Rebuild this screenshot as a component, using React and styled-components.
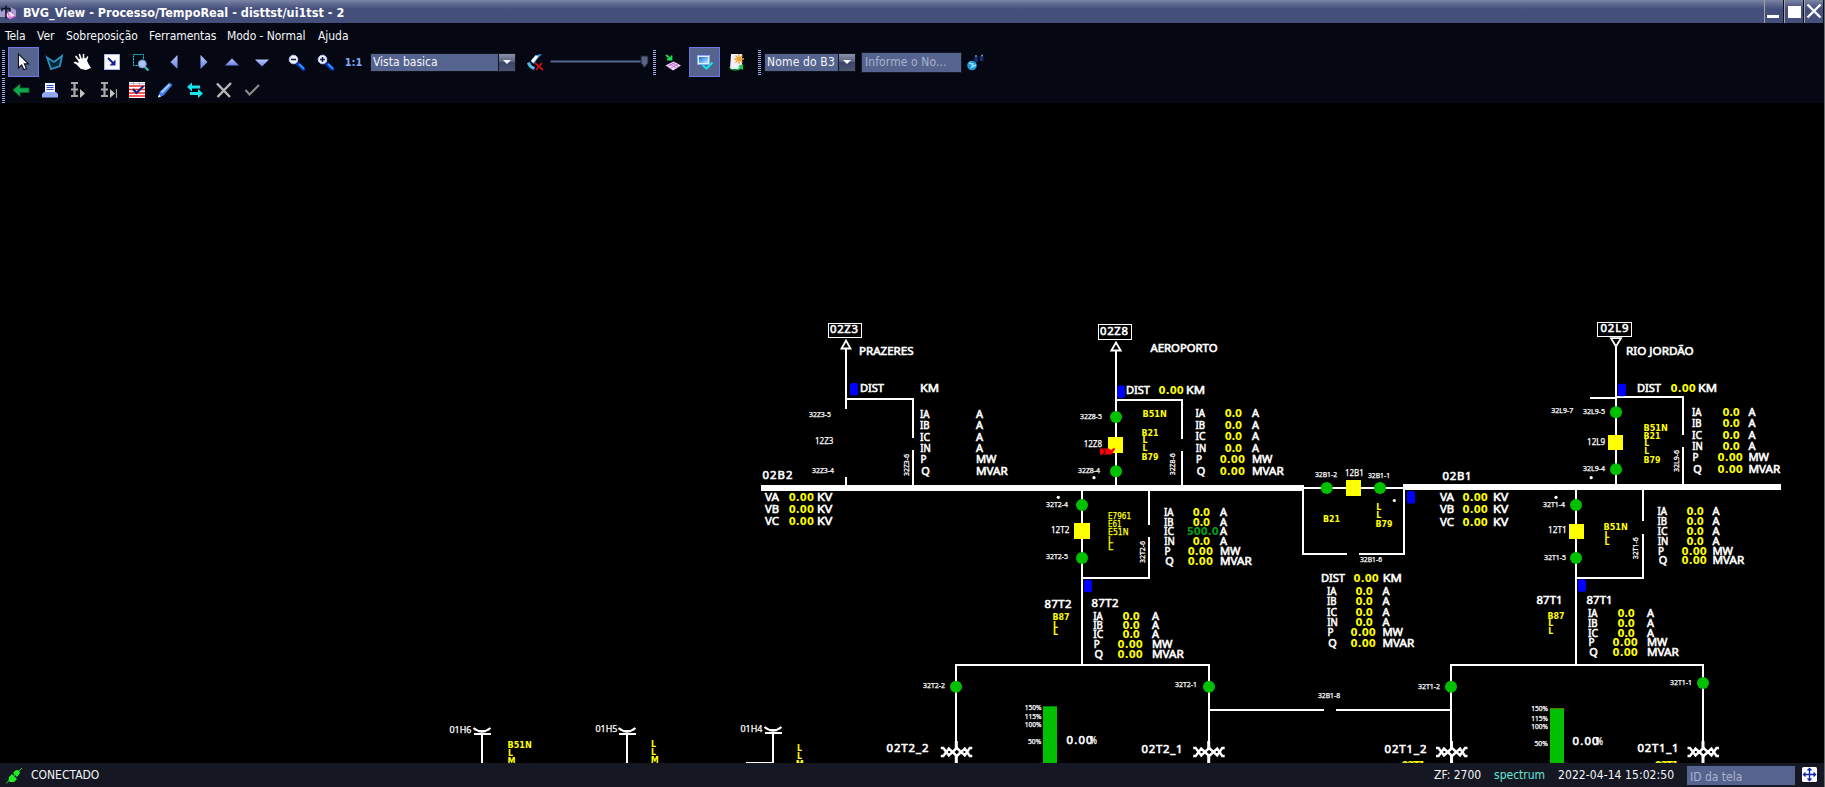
import React from "react";
import styled, { createGlobalStyle } from "styled-components";

const UI = '"DejaVu Sans Condensed", "DejaVu Sans", sans-serif';

const Global = createGlobalStyle`
  html, body { margin: 0; background: #000; overflow: hidden; }
  * { box-sizing: border-box; }
`;

const Window = styled.div`
  width: 1825px;
  height: 787px;
  display: flex;
  flex-direction: column;
  background: #000;
  border-right: 1px solid #6c6c6c;
  font: 12px ${UI};
  color: #f4f6fa;
  overflow: hidden;
`;

/* ---------- title bar and menu ---------- */

const TitleBar = styled.header`
  height: 23px;
  flex: none;
  display: flex;
  align-items: center;
  background: linear-gradient(#7c86a6 0, #616b92 4px, #44507b 9px, #44507b 100%);
`;

const TitleIcon = styled.svg`
  width: 17px;
  height: 17px;
  margin: 2px 6px 0 0;
`;

const Title = styled.h1`
  flex: 1;
  margin: 2px 0 0;
  font: bold 12.5px ${UI};
  letter-spacing: 0.03px;
  color: #fff;
`;

const WinButton = styled.button`
  width: 20px;
  height: 23px;
  padding: 0;
  border: 0;
  border-left: 1px solid #a8a498;
  border-right: 1px solid #10131f;
  background: transparent;
  display: flex;
  svg { width: 18px; height: 23px; }
`;

const MenuBar = styled.nav`
  height: 24px;
  flex: none;
  display: flex;
  align-items: center;
  padding: 1px 0 0 5px;
  background: #050812;
`;

const MenuItem = styled.span`
  width: ${(p) => p.$w}px;
  letter-spacing: -0.05px;
  white-space: nowrap;
`;

/* ---------- tool bars ---------- */

const ToolRow = styled.div`
  height: ${(p) => p.$h}px;
  flex: none;
  display: flex;
  align-items: center;
  padding: 0 0 1px 2px;
  background: #050812;
`;

const Grip = styled.i`
  width: 3px;
  height: 25px;
  margin: 0 ${(p) => p.$after || 0}px 0 ${(p) => p.$before || 0}px;
  background: repeating-linear-gradient(#a3a9e6 0 1px, #050812 1px 2px);
`;

const Tool = styled.button`
  width: ${(p) => p.$w}px;
  height: 30px;
  padding: 0;
  margin-left: ${(p) => p.$gap || 0}px;
  flex: none;
  display: flex;
  align-items: center;
  justify-content: center;
  font: bold 11px ${UI};
  color: #7fa9f5;
  border: 1px solid ${(p) => (p.$active ? "#6e74e6" : "transparent")};
  background: ${(p) => (p.$active ? "#55648f" : "transparent")};
  svg { width: 24px; height: 24px; flex: none; overflow: visible; }
`;

const Combo = styled.div`
  width: ${(p) => p.$w}px;
  height: 19px;
  flex: none;
  display: flex;
  border: 1px solid #10131c;
  background: #55648f;
`;

const ComboText = styled.span`
  flex: 1;
  padding-left: 2px;
  line-height: 17px;
  white-space: nowrap;
  overflow: hidden;
  letter-spacing: ${(p) => p.$track || 0}px;
`;

const ComboArrow = styled.span`
  width: 17px;
  display: flex;
  align-items: center;
  justify-content: center;
  border-left: 1px solid #10131c;
  background: linear-gradient(#8a90a8, #5b6382 45%, #3d4666 50%, #4b5473);
  &::after {
    content: "";
    border: 4px solid transparent;
    border-top-color: #fff;
    border-bottom: 0;
  }
`;

const Slider = styled.svg`
  width: 102px;
  height: 20px;
  flex: none;
`;

const Dots = styled.i`
  width: 1px;
  height: 22px;
  margin-left: 1px;
  background: repeating-linear-gradient(#000 0 1px, #10131c 1px 2px);
`;

const Field = styled.div`
  width: ${(p) => p.$w}px;
  height: ${(p) => p.$h}px;
  flex: none;
  padding: ${(p) => p.$drop || 0}px 0 0 3px;
  line-height: ${(p) => p.$h - 3}px;
  border: 1px solid #161a26;
  background: #55648f;
  color: #aab3cc;
  letter-spacing: ${(p) => p.$track || 0}px;
  margin-left: ${(p) => p.$gap || 0}px;
`;

/* ---------- status bar ---------- */

const StatusBar = styled.footer`
  height: 24px;
  flex: none;
  display: flex;
  align-items: center;
  background: #151822;
`;

const Status = styled.span`
  width: ${(p) => p.$w}px;
  flex: ${(p) => (p.$grow ? 1 : "none")};
  letter-spacing: ${(p) => p.$track || 0}px;
  white-space: nowrap;
  color: ${(p) => p.$color || "#f4f6fa"};
`;

const StatusIcon = styled.svg`
  width: ${(p) => p.$w}px;
  height: 20px;
  flex: none;
`;

/* ---------- one-line diagram ---------- */

const Diagram = styled.svg`
  width: 1824px;
  height: 660px;
  flex: none;
  display: block;
  background: #000;
`;

const Wire = styled.path`
  fill: none;
  stroke: #fff;
  stroke-width: ${(p) => p.$t || 2}px;
  shape-rendering: crispEdges;
`;

const Label = styled.text`
  font-family: ${(p) => (p.$mono ? UI : '"Noto Sans", sans-serif')};
  font-size: ${(p) => p.$size || 11.5}px;
  font-weight: ${(p) => (p.$thin ? 400 : 700)};
  fill: ${(p) => p.$fill || "#fff"};
  stroke: ${(p) => (p.$edge ? p.$fill || "#fff" : "none")};
  stroke-width: ${(p) => p.$edge || 0}px;
`;

const Disc = styled.circle`
  fill: #00c000;
`;

const Breaker = styled.rect`
  fill: #ff0;
`;

const Flag = styled.rect`
  fill: #00f;
  width: 8px;
  height: 12.5px;
`;

/* Equipment names that start with a digit are set with open spacing. */
const Name = ({ x, y, w, s = 11.3, children }) => (
  <Label x={x} y={y} textLength={w} lengthAdjust={/^\d/.test(children) ? "spacing" : "spacingAndGlyphs"}
    $size={s} $thin $edge={0.6}>{children}</Label>
);
const Tag = ({ x, y, w = 22, s = 6.5, children }) => (
  <Label x={x} y={y} textLength={w} lengthAdjust="spacingAndGlyphs" $size={s} $thin $edge={0.25}>{children}</Label>
);
const VTag = ({ x, y, children }) => (
  <Label transform={`translate(${x} ${y}) rotate(-90)`} textLength={22} lengthAdjust="spacingAndGlyphs" $size={7} $thin $edge={0.25}>{children}</Label>
);
const Value = ({ x, y, w = 25.3, fill = "#ff0", children }) => (
  <Label x={x} y={y} textLength={w} lengthAdjust="spacing" $mono $size={11.2} $fill={fill}>{children}</Label>
);
const RELAY_W = { 1: 5, 3: 17, 4: 24.3, 5: 23 };
const Relay = ({ x, y, w, thin, children }) => (
  <Label x={x} y={y} textLength={w || (children === "M" ? 8 : RELAY_W[children.length])} lengthAdjust="spacingAndGlyphs"
    $mono $size={9} $thin={thin} $fill="#ff0" $edge={thin ? 0.25 : 0}>{children}</Label>
);

const LABEL_W = { IA: 9.5, IB: 9.5, IC: 10, IN: 10.5, P: 6, Q: 8.5 };
const OFFSET = { IN: 0.2, P: 0.6, Q: 1.2 };
const UNIT_W = { A: 7, MW: 20.5, MVAR: 31.7 };

const Readings = ({ lx, vx, ux, rows, empty, over = {} }) =>
  rows.map(([name, y]) => {
    const power = name === "P" || name === "Q";
    const unit = name === "P" ? "MW" : name === "Q" ? "MVAR" : "A";
    return (
      <g key={name}>
        <Name x={lx + (OFFSET[name] || 0)} y={y} w={LABEL_W[name]}>{name}</Name>
        {!empty && (over[name]
          ? <Value x={vx - 1} y={y} w={32} fill="#00a010">{over[name]}</Value>
          : <Value x={power ? vx : vx + 5} y={y} w={power ? 25.3 : 17.3}>{power ? "0.00" : "0.0"}</Value>)}
        <Name x={ux} y={y} w={UNIT_W[unit]}>{unit}</Name>
      </g>
    );
  });

const Voltages = ({ x, vx, ux, ys }) =>
  ["VA", "VB", "VC"].map((n, i) => (
    <g key={n}>
      <Name x={x} y={ys[i]} w={14}>{n}</Name>
      <Value x={vx} y={ys[i]}>0.00</Value>
      <Name x={ux} y={ys[i]} w={15.3}>KV</Name>
    </g>
  ));

const Coil = ({ x, y }) => (
  <g fill="none" stroke="#fff" strokeWidth="2.4">
    <path d={`M${x - 15.5} ${y - 4}h2.500l5.500 7.500l8 -7.500l8 7.500l5 -7.500h2.500`} />
    <path d={`M${x - 15.5} ${y + 4}h2.500l5.500 -7.500l8 7.500l8 -7.500l5 7.500h2.500`} />
    <path strokeWidth="3" d={`M${x} ${y - 11}v8 M${x} ${y + 3}v9`} />
  </g>
);

const Load = ({ gauge, x, y, top, ticks, color }) => (
  <g>
    <rect x={x} y={top} width="14" height={763 - top} fill="#00c000" shapeRendering="crispEdges" />
    <rect x={x} y={top} width="14" height="1" fill={color} shapeRendering="crispEdges" />
    {["150%", "115%", "100%", "50%"].map((t, i) => (
      <Tag key={t} x={x - (t.length === 3 ? 15 : 18.3)} y={ticks[i]} w={t.length === 3 ? 13.3 : 16.7}>{t}</Tag>
    ))}
    <Name x={gauge} y={y} w={26}>0.00</Name>
    <Tag x={gauge + 23.5} y={y} w={7} s={10}>%</Tag>
  </g>
);

const Feeder = ({ x, y }) => (
  <g fill="none" stroke="#fff" strokeWidth="2">
    <path d={`M${x - 8.5} ${y - 5}q8.5 7 17 0`} strokeWidth="2.2" />
    <path d={`M${x - 4} ${y - 1.8}h8`} />
    <path d={`M${x - 8} ${y + 1}h17`} shapeRendering="crispEdges" />
    <path d={`M${x} ${y}V763`} shapeRendering="crispEdges" />
  </g>
);

const Terminal = ({ x, y, w = 33, h = 14, tx, ty, children }) => (
  <g>
    <rect x={x + 0.5} y={y + 0.5} width={w} height={h} fill="none" stroke="#fff" />
    <Name x={tx} y={ty} w={28}>{children}</Name>
  </g>
);

function OneLine() {
  return (
    <Diagram viewBox="0 103 1824 660">
      {/* bus bars */}
      <Wire $t={6} d="M761 488H1304 M1403 487H1781" />

      {/* 02Z3 */}
      <Terminal x={828} y={323} tx={830} ty={333.3}>02Z3</Terminal>
      <path d="M846 340.5L850.5 348.5H841.5Z" fill="none" stroke="#fff" strokeWidth="1.8" />
      <Name x={859} y={355} w={54.5}>PRAZERES</Name>
      <Wire d="M846 349V409 M846 399H913V438 M913 450V485 M846 477V485" />
      <Flag x={850} y={383} rx={2} />
      <Name x={860} y={392} w={24}>DIST</Name>
      <Name x={920} y={392} w={19}>KM</Name>
      <Readings empty lx={920} ux={976} rows={[["IA", 418], ["IB", 429], ["IC", 441], ["IN", 452], ["P", 463], ["Q", 475]]} />
      <Tag x={809} y={416.7}>32Z3-5</Tag>
      <Tag x={815} y={444.3} w={18.3} s={8.5}>12Z3</Tag>
      <Tag x={812} y={472.7}>32Z3-4</Tag>
      <VTag x={909} y={476}>32Z3-6</VTag>
      <Name x={762.5} y={479} w={30}>02B2</Name>
      <Voltages x={765} vx={788.7} ux={817} ys={[501, 513, 525]} />

      {/* 02Z8 */}
      <Terminal x={1098} y={324} h={15} tx={1100} ty={335.3}>02Z8</Terminal>
      <path d="M1116 342.5L1120.7 350.5H1111.3Z" fill="none" stroke="#fff" strokeWidth="1.8" />
      <Name x={1150.5} y={352} w={67}>AEROPORTO</Name>
      <Wire d="M1116 351V485 M1116 400H1182V439 M1182 451V485" />
      <Flag x={1117} y={385.5} rx={2} />
      <Name x={1126} y={393.7} w={24}>DIST</Name>
      <Value x={1158.5} y={393.7}>0.00</Value>
      <Name x={1186} y={393.7} w={19}>KM</Name>
      <Disc cx={1116} cy={417} r={6} />
      <Disc cx={1116} cy={471.3} r={6} />
      <Breaker x={1108} y={437} width={15} height={16} />
      <path d="M1100 448.5H1109L1111 450L1114.5 447.5L1115 449.5L1111.3 454.5H1100Z" fill="#f00" />
      <path d="M1103 450h3M1104.5 450v3.5M1103 453.5h3" stroke="#400" fill="none" />
      <Tag x={1080} y={418.7}>32Z8-5</Tag>
      <Tag x={1083.7} y={446.7} w={18.3} s={8.5}>12Z8</Tag>
      <Tag x={1078} y={472.7}>32Z8-4</Tag>
      <circle cx={1094} cy={477.7} r={1.6} fill="#fff" />
      <Relay x={1142.5} y={417}>B51N</Relay>
      <Relay x={1141.5} y={436.3}>B21</Relay>
      <Relay x={1142.5} y={442.9}>L</Relay>
      <Relay x={1142.5} y={451}>L</Relay>
      <Relay x={1141.5} y={460}>B79</Relay>
      <VTag x={1175.3} y={475.3}>32Z8-6</VTag>
      <Readings lx={1195.5} vx={1219.7} ux={1252} rows={[["IA", 416.7], ["IB", 428.7], ["IC", 439.7], ["IN", 451.7], ["P", 462.7], ["Q", 475]]} />

      {/* 12T2 bay */}
      <Wire d="M1082 491V665 M1149 491V525 M1149 537V578H1082" />
      <circle cx={1058.3} cy={497.3} r={1.6} fill="#fff" />
      <Disc cx={1082} cy={505} r={6} />
      <Disc cx={1082} cy={558} r={6} />
      <Breaker x={1074} y={523} width={16} height={16} />
      <Tag x={1046} y={506.7}>32T2-4</Tag>
      <Tag x={1051} y={532.7} w={18.3} s={8.5}>12T2</Tag>
      <Tag x={1046} y={559}>32T2-5</Tag>
      <Relay thin x={1108} y={519}>E7961</Relay>
      <Relay thin x={1108} y={527} w={13.5}>E61</Relay>
      <Relay thin x={1108} y={535} w={20.5}>E51N</Relay>
      <Relay thin x={1108} y={543}>L</Relay>
      <Relay thin x={1108} y={549.7}>L</Relay>
      <VTag x={1145.3} y={563}>32T2-6</VTag>
      <Readings lx={1164} vx={1187.7} ux={1220} over={{ IC: "500.0" }}
        rows={[["IA", 516.3], ["IB", 526], ["IC", 535.3], ["IN", 545], ["P", 555], ["Q", 565]]} />

      {/* bus tie */}
      <Wire d="M1304 488H1403 M1303 488V554H1347 M1359 554H1404V490" />
      <Disc cx={1326.7} cy={488} r={6} />
      <Disc cx={1380} cy={488} r={6} />
      <Breaker x={1346} y={480} width={15} height={16} />
      <Tag x={1315} y={476.7}>32B1-2</Tag>
      <Tag x={1345} y={475.7} w={18.7} s={8.5}>12B1</Tag>
      <Tag x={1368} y={477.7}>32B1-1</Tag>
      <circle cx={1394.3} cy={500.5} r={1.6} fill="#fff" />
      <Relay x={1323} y={522}>B21</Relay>
      <Relay x={1376.2} y={509.7}>L</Relay>
      <Relay x={1376.2} y={517.7}>L</Relay>
      <Relay x={1375.5} y={526.7}>B79</Relay>
      <Tag x={1360} y={561.7}>32B1-6</Tag>
      <Flag x={1407} y={491} rx={2} />
      <Name x={1442.5} y={480} w={29}>02B1</Name>
      <Voltages x={1440} vx={1462.5} ux={1493} ys={[501, 513, 526]} />
      <Name x={1321} y={582} w={24}>DIST</Name>
      <Value x={1353.5} y={582}>0.00</Value>
      <Name x={1382.8} y={582} w={19}>KM</Name>
      <Readings lx={1327} vx={1350.5} ux={1382.5} rows={[["IA", 595], ["IB", 605], ["IC", 616], ["IN", 626], ["P", 636], ["Q", 647]]} />

      {/* 02L9 */}
      <Terminal x={1597} y={322} w={34} tx={1600.5} ty={332.3}>02L9</Terminal>
      <path d="M1616 346.5L1611 338.2H1621Z" fill="none" stroke="#fff" strokeWidth="1.8" />
      <Name x={1626} y={355} w={67.5}>RIO JORDÃO</Name>
      <Wire d="M1616 347V484 M1590 398H1616 M1616 397H1683V435 M1683 447V484" />
      <Flag x={1618} y={383.7} rx={2} />
      <Name x={1637} y={392} w={24}>DIST</Name>
      <Value x={1670.5} y={392}>0.00</Value>
      <Name x={1698} y={392} w={19}>KM</Name>
      <Disc cx={1616} cy={412.3} r={6} />
      <Disc cx={1616} cy={469.3} r={6} />
      <Breaker x={1608} y={435} width={15} height={15} />
      <Tag x={1551.3} y={412.7}>32L9-7</Tag>
      <Tag x={1583} y={413.7}>32L9-5</Tag>
      <Tag x={1587} y={445} w={18.3} s={8.5}>12L9</Tag>
      <Tag x={1583} y={470.7}>32L9-4</Tag>
      <circle cx={1591.2} cy={477.7} r={1.6} fill="#fff" />
      <Relay x={1643.5} y={431}>B51N</Relay>
      <Relay x={1643.5} y={438.7}>B21</Relay>
      <Relay x={1644.3} y={446}>L</Relay>
      <Relay x={1644.3} y={454}>L</Relay>
      <Relay x={1643.5} y={463}>B79</Relay>
      <VTag x={1679.3} y={472}>32L9-6</VTag>
      <Readings lx={1692} vx={1717.5} ux={1748.5} rows={[["IA", 415.5], ["IB", 427.3], ["IC", 439], ["IN", 449.7], ["P", 461.3], ["Q", 473]]} />

      {/* 12T1 bay */}
      <Wire d="M1576 490V665 M1643 490V521 M1643 534V578H1576" />
      <circle cx={1556} cy={497.3} r={1.6} fill="#fff" />
      <Disc cx={1576} cy={505} r={6} />
      <Disc cx={1576} cy={558} r={6} />
      <Breaker x={1569} y={524} width={15} height={15} />
      <Tag x={1543} y={506.7}>32T1-4</Tag>
      <Tag x={1548} y={532.7} w={18.7} s={8.5}>12T1</Tag>
      <Tag x={1544} y={559.7}>32T1-5</Tag>
      <Relay x={1603.5} y={530}>B51N</Relay>
      <Relay x={1604.5} y={537.5}>L</Relay>
      <Relay x={1604.5} y={545.3}>L</Relay>
      <VTag x={1638.3} y={559.3}>32T1-6</VTag>
      <Readings lx={1657.5} vx={1681.5} ux={1712.5} rows={[["IA", 515], ["IB", 525], ["IC", 535], ["IN", 545], ["P", 555], ["Q", 564.3]]} />

      {/* transformer T2 */}
      <Flag x={1084} y={579.7} rx={2} />
      <Name x={1044.5} y={607.7} w={27}>87T2</Name>
      <Name x={1091.5} y={606.7} w={27}>87T2</Name>
      <Relay x={1052.5} y={620}>B87</Relay>
      <Relay x={1053} y={627.7}>L</Relay>
      <Relay x={1053} y={634.7}>L</Relay>
      <Readings lx={1093.2} vx={1117.5} ux={1152} rows={[["IA", 620], ["IB", 629], ["IC", 638], ["P", 648], ["Q", 658]]} />
      <Wire d="M956 742V665H1209V742 M1209 710H1324 M1336 710H1451" />
      <Disc cx={956} cy={686.7} r={6} />
      <Disc cx={1209} cy={686.7} r={6} />
      <Tag x={923} y={687.7}>32T2-2</Tag>
      <Tag x={1175} y={687.3}>32T2-1</Tag>
      <Tag x={1318} y={697.7}>32B1-8</Tag>
      <Load x={1043} top={706} gauge={1066.5} y={744} ticks={[710, 718.7, 727, 743.7]} color="#008000" />
      <Name x={886.5} y={752} w={42}>02T2_2</Name>
      <Name x={1141.5} y={753.3} w={41}>02T2_1</Name>
      <Coil x={956.3} y={752} />
      <Coil x={1208.7} y={752} />

      {/* transformer T1 */}
      <Flag x={1578} y={579.3} rx={2} />
      <Name x={1536.5} y={604} w={26}>87T1</Name>
      <Name x={1586.5} y={604} w={26}>87T1</Name>
      <Relay x={1547.5} y={619}>B87</Relay>
      <Relay x={1548.3} y={626}>L</Relay>
      <Relay x={1548.3} y={634}>L</Relay>
      <Readings lx={1588} vx={1612.5} ux={1647} rows={[["IA", 616.7], ["IB", 627], ["IC", 637], ["P", 646], ["Q", 656]]} />
      <Wire d="M1451 742V665H1703V742" />
      <Disc cx={1451} cy={686.7} r={6} />
      <Disc cx={1703} cy={683} r={6} />
      <Tag x={1418} y={689}>32T1-2</Tag>
      <Tag x={1670} y={684.7}>32T1-1</Tag>
      <Load x={1549.5} top={708} gauge={1572.5} y={745} ticks={[710.7, 720.7, 728.7, 745.7]} color="#5c7a00" />
      <Name x={1384.5} y={753.3} w={42}>02T1_2</Name>
      <Name x={1637.5} y={752} w={41}>02T1_1</Name>
      <Coil x={1451.5} y={752} />
      <Coil x={1703} y={752} />
      <Value x={1401.5} y={769} w={24}>02T1</Value>
      <Value x={1654.7} y={768.7} w={24}>02T1</Value>

      {/* outgoing feeders */}
      <Tag x={449.5} y={733} w={22} s={9}>01H6</Tag>
      <Tag x={595.5} y={732} w={22} s={9}>01H5</Tag>
      <Tag x={740.5} y={732} w={22} s={9}>01H4</Tag>
      <Feeder x={482} y={733} />
      <Feeder x={627} y={733} />
      <Feeder x={773} y={732} />
      <Wire $t={1} d="M746 762.5H773" />
      <Relay x={507.5} y={748}>B51N</Relay>
      <Relay x={508} y={755.7}>L</Relay>
      <Relay x={507.5} y={764}>M</Relay>
      <Relay x={651} y={747}>L</Relay>
      <Relay x={651} y={755}>L</Relay>
      <Relay x={650.8} y={763}>M</Relay>
      <Relay x={797} y={750.7}>L</Relay>
      <Relay x={797} y={758.8}>L</Relay>
      <Relay x={795.7} y={767}>M</Relay>
    </Diagram>
  );
}

/* ---------- icons ---------- */

const Icon = ({ children }) => <svg viewBox="0 0 24 24">{children}</svg>;

const Magnifier = ({ plus }) => (
  <Icon>
    <path d="M13 13l6.5 6" stroke="#1030b0" strokeWidth="4" strokeLinecap="round" />
    <path d="M15.5 14.5l4 3.8" stroke="#2f9bff" strokeWidth="1.8" strokeLinecap="round" />
    <circle cx="9.5" cy="9.5" r="4.3" fill="#f4f6ff" stroke="#b8c4f0" />
    <path d={plus ? "M7 9.5h5M9.5 7v5" : "M7 9.5h5"} stroke="#101850" strokeWidth="1.6" />
  </Icon>
);

const StepIcon = ({ end }) => (
  <Icon>
    <path d="M5 5h7M5 11.500h7M5 18h7M8.500 5v13" stroke="#a9a9a9" strokeWidth="2.200" fill="none" />
    <path d="M14 11l5 4.500l-5 4.500z" fill="#c4c4c4" />
    {end && <path d="M20.500 11v9" stroke="#a0a0a0" strokeWidth="1.200" />}
  </Icon>
);

const Gradients = styled.svg`
  position: absolute;
  width: 0;
  height: 0;
`;

const Grad = () => (
  <Gradients>
    <defs>
      <linearGradient id="peri" x1="0" y1="0" x2="0" y2="1">
        <stop offset="0" stopColor="#b9c6ff" />
        <stop offset="1" stopColor="#6b82e0" />
      </linearGradient>
      <linearGradient id="sky" x1="0" y1="0" x2="1" y2="1">
        <stop offset="0" stopColor="#1668d8" />
        <stop offset="1" stopColor="#b8ecff" />
      </linearGradient>
    </defs>
  </Gradients>
);

export default function App() {
  return (
    <Window>
      <Global />
      <Grad />
      <TitleBar>
        <TitleIcon viewBox="0 0 17 17">
          <path d="M0 6h5v7h-5zM10 3l6 3v6l-5 2z" fill="#a8a0cc" />
          <path d="M4 11l6 4 6-3-6-5z" fill="#e8dcf4" stroke="#c060c8" strokeWidth=".8" />
          <path d="M8 9l2 5 5-2" fill="none" stroke="#e850c8" />
          <path d="M6 1.500v13M1.500 4.500h9M2 4.500v3M10 4.500v3" stroke="#111426" strokeWidth="1.500" fill="none" />
        </TitleIcon>
        <Title>BVG_View - Processo/TempoReal - disttst/ui1tst - 2</Title>
        <WinButton><svg viewBox="0 0 18 23"><path d="M2 15h12v3h-12z" fill="#fff" /></svg></WinButton>
        <WinButton><svg viewBox="0 0 18 23"><path d="M3 6h13v12h-13z" fill="#fff" /></svg></WinButton>
        <WinButton><svg viewBox="0 0 18 23"><path d="M2.500 4.500l13 13M15.500 4.500l-13 13" stroke="#fff" strokeWidth="2.400" /></svg></WinButton>
      </TitleBar>

      <MenuBar>
        <MenuItem $w={32}>Tela</MenuItem>
        <MenuItem $w={29}>Ver</MenuItem>
        <MenuItem $w={83}>Sobreposição</MenuItem>
        <MenuItem $w={78}>Ferramentas</MenuItem>
        <MenuItem $w={91}>Modo - Normal</MenuItem>
        <MenuItem $w={40}>Ajuda</MenuItem>
      </MenuBar>

      <ToolRow $h={31}>
        <Grip $after={3} />
        <Tool $w={31} $active>
          <Icon><path d="M6.500 4v14l3.200-3 2.200 4.700 2.600-1.200-2.200-4.600h4.200z" fill="#fff" stroke="#0a0c18" strokeWidth="1.100" /></Icon>
        </Tool>
        <Tool $w={30}>
          <Icon><path d="M5 7.500l7 4.500 8-6-2 10-9 3z" fill="#06283c" stroke="#2f8fbd" strokeWidth="1.800" /></Icon>
        </Tool>
        <Tool $w={27}>
          <Icon>
            <path d="M7.500 10L5 6.500M10 9L8.500 4.500M12.500 9L12.500 4.500M15 11L16.500 7" stroke="#fff" strokeWidth="1.600" strokeLinecap="round" />
            <path d="M7 9l8-1 2 5 3 5-5 2-5-1-5-5-2.500-1 1.500-1.500 3.500 1.500z" fill="#fff" />
          </Icon>
        </Tool>
        <Tool $w={31}>
          <Icon>
            <rect x="4.500" y="4.500" width="15" height="15" fill="#fdfdff" stroke="#a9b8f4" />
            <path d="M8 8l5.500 5.500" stroke="#1020a0" strokeWidth="2" />
            <path d="M15.500 9.500v6h-6z" fill="#1020a0" />
          </Icon>
        </Tool>
        <Tool $w={28}>
          <Icon>
            <rect x="4.500" y="4.500" width="10" height="11" fill="none" stroke="#18e0e8" strokeDasharray="2 1" />
            <path d="M15 16l4.500 4.500" stroke="#30c0a8" strokeWidth="2.400" />
            <circle cx="13.300" cy="14" r="4" fill="#a8c4f0" stroke="#6c8cd8" />
          </Icon>
        </Tool>
        <Tool $w={28} $gap={5}><Icon><path d="M15.500 5v14l-7-7z" fill="url(#peri)" /></Icon></Tool>
        <Tool $w={31}><Icon><path d="M8.500 5v14l7-7z" fill="url(#peri)" /></Icon></Tool>
        <Tool $w={26}><Icon><path d="M5 15.500h14l-7-7z" fill="url(#peri)" /></Icon></Tool>
        <Tool $w={34}><Icon><path d="M5 9.500h14l-7 7z" fill="url(#peri)" /></Icon></Tool>
        <Tool $w={34}><Magnifier /></Tool>
        <Tool $w={24}><Magnifier plus /></Tool>
        <Tool $w={33}>1:1</Tool>
        <Combo $w={146}><ComboText>Vista basica</ComboText><ComboArrow /></Combo>
        <Tool $w={30} $gap={4}>
          <Icon>
            <path d="M19 4q-7 0-11 7l3 3q3-6 8-10z" fill="#2aa8f0" />
            <path d="M14 6l-5 6" stroke="#fff" strokeWidth="3" />
            <path d="M4 13q1 5 7 7l1-3q-4-1-5-5z" fill="#58b8e8" />
            <path d="M12 13l8 7M19 13l-6 7" stroke="#d01010" strokeWidth="1.800" />
          </Icon>
        </Tool>
        <Slider viewBox="0 0 102 20">
          <path d="M0.500 9.500h91" stroke="#55648f" strokeWidth="2" />
          <path d="M91 4h7v7l-3.500 4.500-3.500-4.500z" fill="#596384" stroke="#1c2130" />
        </Slider>
        <Grip $before={1} $after={1} />
        <Tool $w={32}>
          <Icon>
            <path d="M4.500 15.500l8-4 7.500 4-8 5z" fill="#f4d8f8" />
            <path d="M8 13.500l8 5M10 12.500l8 4.500M6.500 16.500l8-4M9 18.500l8-4.500" stroke="#b060c8" strokeWidth=".8" />
            <path d="M5 5l5 4M10.500 5.500v4h-4.500" stroke="#18e050" strokeWidth="1.800" fill="none" />
          </Icon>
        </Tool>
        <Tool $w={31} $active>
          <Icon>
            <rect x="4.500" y="5.500" width="12" height="9" fill="#e4f0ff" stroke="#8fa8f0" />
            <rect x="6" y="7" width="9" height="6" fill="url(#sky)" />
            <path d="M9.500 15l4 3.500 6-6" stroke="#14e4e8" strokeWidth="2.200" fill="none" />
          </Icon>
        </Tool>
        <Tool $w={31}>
          <Icon>
            <path d="M7 4h11v15H6z" fill="#eef0f6" />
            <path d="M5 17q6 5 11 0l-2-1 5-2v6l-2-1q-6 3-11 0z" fill="#18c848" />
            <path d="M15 4v10M10 9h10M11.500 5.500l7 7M18.500 5.500l-7 7" stroke="#f0a030" strokeWidth="1.300" />
          </Icon>
        </Tool>
        <Dots />
        <Grip $before={5} $after={3} />
        <Combo $w={92}><ComboText $track={0.15}>Nome do B3</ComboText><ComboArrow /></Combo>
        <Field $w={101} $h={21} $gap={5} $track={0.1}>Informe o No...</Field>
        <Tool $w={28}>
          <Icon>
            <circle cx="8" cy="15.500" r="4.800" fill="#2498d8" />
            <path d="M5 13l4 1-1 3 4-2" stroke="#8ce0ff" fill="none" strokeWidth="1.600" />
            <path d="M12 12V6.500M17.500 11V6" stroke="#1c2c70" strokeWidth="3.500" />
            <path d="M11 6h2M17 5.500h2" stroke="#7888c8" strokeWidth="1.500" />
          </Icon>
        </Tool>
      </ToolRow>

      <ToolRow $h={25}>
        <Grip $after={1} />
        <Tool $w={30}><Icon><path d="M4 12l7-6v4h9v4.500h-9v4z" fill="#10a848" stroke="#0a6c30" strokeWidth=".7" /></Icon></Tool>
        <Tool $w={27}>
          <Icon>
            <rect x="7" y="5" width="10" height="10" fill="#f2f4ff" />
            <path d="M8.500 7.500h7M8.500 9.500h7M8.500 11.500h7" stroke="#2848c8" />
            <path d="M6 14h12l2 2v3.500H4V16z" fill="#90a8f8" />
          </Icon>
        </Tool>
        <Tool $w={30}><StepIcon /></Tool>
        <Tool $w={29}><StepIcon end /></Tool>
        <Tool $w={29}>
          <Icon>
            <rect x="4" y="4" width="16" height="16" fill="#fff" />
            <path d="M4 8h16M4 11.500h16M4 15h16M4 18h16" stroke="#f02020" strokeWidth="1.500" />
            <path d="M8.500 4v3M14.500 4v3M4 5.500h16" stroke="#a0a8c0" strokeWidth=".7" />
            <path d="M8 11l3.500 4 7-7" stroke="#101c80" strokeWidth="2" fill="none" />
          </Icon>
        </Tool>
        <Tool $w={28}>
          <Icon>
            <path d="M5 19.500l2-6L16.500 4.500l3 2.500-9 10.500z" fill="#4080f0" />
            <path d="M8.500 14.500l8-8" stroke="#a8ccff" strokeWidth="1.800" />
            <path d="M5 19.500l1-3 2 2z" fill="#fff" />
          </Icon>
        </Tool>
        <Tool $w={31}>
          <Icon>
            <path d="M4 9l5-4.500V7.500h8v3H9v3z" fill="#18e4ec" />
            <path d="M20 15.500l-5-4.500v3H7v3h8v3z" fill="#18e4ec" />
          </Icon>
        </Tool>
        <Tool $w={27}><Icon><path d="M5 5.500l13 13.500M19 5L5.500 19" stroke="#b8b8b8" strokeWidth="2.500" /></Icon></Tool>
        <Tool $w={30}><Icon><path d="M5.500 12l4 4.500 9.500-9.500" stroke="#8c8c8c" strokeWidth="2" fill="none" /></Icon></Tool>
      </ToolRow>

      <OneLine />

      <StatusBar>
        <StatusIcon $w={31} viewBox="0 0 31 20">
          <path d="M6 18.500L22 3" stroke="#20e020" strokeWidth="1" />
          <path d="M9 12l3-3 5 5-3 3h-4l-1.500-1.500zM13 8l3-3 3 .500 1 2.500-3 4z" fill="#22f022" />
        </StatusIcon>
        <Status $grow>CONECTADO</Status>
        <Status $w={60}>ZF: 2700</Status>
        <Status $w={64} $color="#66e4d4">spectrum</Status>
        <Status $w={128} $track={0.08}>2022-04-14 15:02:50</Status>
        <Field $w={110} $h={21} $drop={2}>ID da tela</Field>
        <StatusIcon $w={28} viewBox="0 0 28 20">
          <rect x="6" y="2" width="15" height="15" rx="1.500" fill="#fff" />
          <path d="M13.500 4v11M8 9.500h11M11.500 5.500l2-2 2 2M11.500 13.500l2 2 2-2M9.500 7.500l-2 2 2 2M17.500 7.500l2 2-2 2" stroke="#1428b0" strokeWidth="1.400" fill="none" />
        </StatusIcon>
      </StatusBar>
    </Window>
  );
}
